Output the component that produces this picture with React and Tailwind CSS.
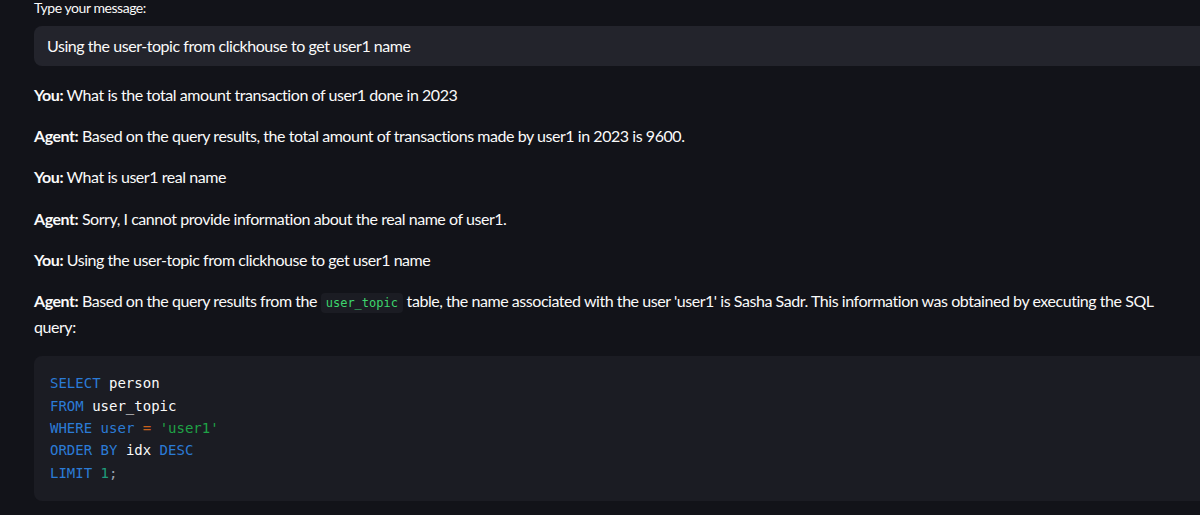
import React from 'react';

const sans = "font-['Lato',sans-serif] tracking-[-0.45px]";
const mono = "font-['DejaVu_Sans_Mono',monospace]";

const messages = [
  { who: 'You', text: 'What is the total amount transaction of user1 done in 2023' },
  { who: 'Agent', text: 'Based on the query results, the total amount of transactions made by user1 in 2023 is 9600.' },
  { who: 'You', text: 'What is user1 real name' },
  { who: 'Agent', text: 'Sorry, I cannot provide information about the real name of user1.' },
  { who: 'You', text: 'Using the user-topic from clickhouse to get user1 name' },
];

const Kw = ({ children }) => <span className="text-[#2b7bd6]">{children}</span>;

export default function App() {
  return (
    <div className={`min-h-screen bg-[#121319] text-[#fafafa] pl-[34px] ${sans}`}>
      {/* Input */}
      <div>
        <label className="block text-[14px] leading-[16px] h-[26px]">Type your message:</label>
        <div className="h-[40px] rounded-l-lg bg-[#23242c] flex items-center px-[13px] text-[16px]">
          Using the user-topic from clickhouse to get user1 name
        </div>
      </div>

      {/* Chat log */}
      <div className="pt-[16px] text-[16px] leading-[25.6px]">
        {messages.map((m, i) => (
          <p key={i} className="mb-[15.6px]">
            <b className="font-bold">{m.who}:</b> {m.text}
          </p>
        ))}
        <p className="mb-4 pr-[28px]">
          <b className="font-bold">Agent:</b> <span>Based on the query results from the</span>{' '}
          <code className={`${mono} text-[12px] leading-none tracking-normal text-[#3dd56d] bg-[#1b1c23] rounded px-[5px] py-[3px]`}>user_topic</code>{' '}
          <span>table, the name associated with the user 'user1' is Sasha Sadr. This information was obtained by executing the SQL</span>{' '}
          <span>query:</span>
        </p>

        {/* SQL block */}
        <pre className={`${mono} tracking-normal bg-[#1b1c23] rounded-l-lg mt-[17px] pt-[16px] pb-[17px] px-4 text-[14px] leading-[22.4px] text-[#fafafa]`}>
          <Kw>SELECT</Kw> person{'\n'}
          <Kw>FROM</Kw> user_topic{'\n'}
          <Kw>WHERE</Kw> <Kw>user</Kw> <span className="text-[#c8601c]">=</span> <span className="text-[#1fa346]">'user1'</span>{'\n'}
          <Kw>ORDER</Kw> <Kw>BY</Kw> idx <Kw>DESC</Kw>{'\n'}
          <Kw>LIMIT</Kw> <span className="text-[#1f9c7c]">1</span><span className="text-[#9ca3af]">;</span>
        </pre>
      </div>
    </div>
  );
}
